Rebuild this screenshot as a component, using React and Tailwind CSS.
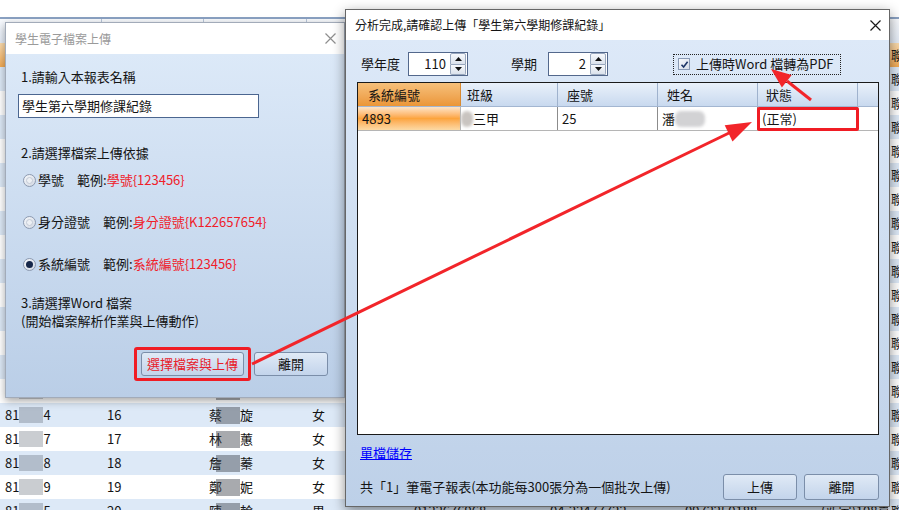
import React from "react";

const colW = ["w-[102px]", "w-[102px]", "w-[103px]", "w-[102px]", "w-[136px]", "w-[135px]", "w-[136px]", "w-[72px]", "w-[120px]"];

const names = [
  ["王", "翔"], ["李", "涵"], ["張", "婷"], ["劉", "瑜"], ["陳", "宇"],
  ["楊", "萱"], ["黃", "豪"], ["吳", "庭"], ["趙", "琪"], ["周", "傑"],
  ["徐", "安"], ["孫", "妤"], ["胡", "銘"], ["朱", "慈"], ["高", "芸"],
  ["蔡", "旋"], ["林", "蕙"], ["詹", "蓁"], ["鄭", "妮"], ["陳", "翰"],
];
const genders = "男女女女男女男女女男男女男女女女女女女男";
const lastDigits = "12345678901235647895";

const rows = names.map((nm, i) => ({
  no: i + 1,
  last: lastDigits[i],
  name: nm,
  gender: genders[i],
}));

function XIcon({ className }) {
  return (
    <svg width="11" height="11" viewBox="0 0 11 11" className={className}>
      <path d="M0.5 0.5 L10.5 10.5 M10.5 0.5 L0.5 10.5" stroke="currentColor" strokeWidth="1.2" fill="none" />
    </svg>
  );
}

function Radio({ checked }) {
  return (
    <span className="flex h-[13px] w-[13px] shrink-0 items-center justify-center rounded-full border border-[#8d9ab0] bg-linear-to-br from-[#f6f8fb] to-[#d3d9e3]">
      {checked ? (
        <span className="h-[7px] w-[7px] rounded-full bg-[#17284a]" />
      ) : (
        <span className="h-[7px] w-[7px] rounded-full border border-[#c3cad6] bg-[#edf0f4]" />
      )}
    </span>
  );
}

function RadioRow({ checked, label, example, className }) {
  return (
    <div className={"flex h-[18px] items-center pl-[5px] " + className}>
      <Radio checked={checked} />
      <span className="ml-[2px]">{label}</span>
      <span className="ml-[13px]">範例:</span>
      <span className="text-[#f0202a]">{example}</span>
    </div>
  );
}

function WinButton({ children, className }) {
  return (
    <div className={"flex shrink-0 items-center justify-center rounded-[3px] border border-[#7b8ea9] bg-linear-to-b from-[#e0eaf6] to-[#c3d4eb] " + className}>
      {children}
    </div>
  );
}

function Spinner({ value }) {
  return (
    <div className="flex h-[24px] w-[60px] shrink-0 items-center border border-[#53688c] bg-white">
      <span className="flex-1 pr-[4px] text-right">{value}</span>
      <div className="mr-[1px] flex h-[22px] w-[16px] flex-col">
        <span className="flex flex-1 items-center justify-center rounded-t-[2px] border border-[#98a7bd] bg-linear-to-b from-[#f7f9fc] to-[#dbe2ec]">
          <svg width="7" height="4" viewBox="0 0 7 4"><path d="M0 4 L3.5 0 L7 4 Z" fill="#111" /></svg>
        </span>
        <span className="flex flex-1 items-center justify-center rounded-b-[2px] border border-t-0 border-[#98a7bd] bg-linear-to-b from-[#f7f9fc] to-[#dbe2ec]">
          <svg width="7" height="4" viewBox="0 0 7 4"><path d="M0 0 L3.5 4 L7 0 Z" fill="#111" /></svg>
        </span>
      </div>
    </div>
  );
}

function BgCell({ i, pad = "pl-[5px]", children }) {
  return (
    <div className={colW[i] + " flex h-full shrink-0 items-center overflow-hidden whitespace-nowrap " + pad}>
      {children}
    </div>
  );
}

function BgRow({ r }) {
  const bg =
    r.no === 1
      ? "bg-linear-to-b from-[#fbdcae] to-[#f2aa52]"
      : r.no % 2 === 0
      ? "bg-[#dde9f7]"
      : "bg-white";
  return (
    <div className={"flex h-[24px] w-max items-center " + bg}>
      <BgCell i={0}>
        81<span className="inline-block h-[16px] w-[24px] bg-[#4e5966]/30" />
        {r.last}
      </BgCell>
      <BgCell i={1}>{r.no}</BgCell>
      <BgCell i={2}>
        {r.name[0]}
        <span className="relative -ml-[6px] inline-block h-[17px] w-[24px] bg-[#3d434c]/45" />
        {r.name[1]}
      </BgCell>
      <BgCell i={3}>{r.gender}</BgCell>
      <BgCell i={4}>0122676968</BgCell>
      <BgCell i={5}>04-22477722</BgCell>
      <BgCell i={6}>0972250188</BgCell>
      <BgCell i={7}>(新家)108臺中市</BgCell>
      <BgCell i={8} pad="pl-[3px]">聯絡人</BgCell>
    </div>
  );
}

export default function App() {
  return (
    <div className="relative h-[510px] w-[899px] overflow-hidden bg-white font-[family-name:'Noto_Sans_CJK_TC','Noto_Sans',sans-serif] text-[13px] leading-[18px] text-[#141414]">
      {/* background grid */}
      <div className="h-[17px] bg-white" />
      <div className="flex h-[26px] w-max border-t-2 border-[#8aa1c2] bg-linear-to-b from-[#f8fafd] to-[#e3ebf6]">
        {colW.map((w, i) => (
          <div key={i} className={w + " shrink-0 border-r border-[#b7c5d9]"} />
        ))}
      </div>
      {rows.map((r) => (
        <BgRow key={r.no} r={r} />
      ))}

      {/* left dialog */}
      <div className="absolute left-[5px] top-[22px] flex h-[376px] w-[340px] flex-col border border-[#a2abb9] shadow-[0_3px_8px_rgba(0,0,0,0.35)]">
        <div className="flex h-[31px] shrink-0 items-center justify-between bg-white pl-[9px] pr-[8px]">
          <span className="text-[12px] text-[#9a9a9a]">學生電子檔案上傳</span>
          <XIcon className="text-[#8e8e8e]" />
        </div>
        <div className="flex flex-1 flex-col bg-linear-to-b from-[#dce9f8] to-[#bacee7] px-[12px]">
          <div className="mt-[14px] pl-[3px]">1.請輸入本報表名稱</div>
          <div className="mt-[8px] flex h-[24px] w-[241px] items-center border border-[#4b6690] bg-white pl-[3px]">
            學生第六學期修課紀錄
          </div>
          <div className="mt-[26px] pl-[3px]">2.請選擇檔案上傳依據</div>
          <RadioRow className="mt-[9px]" label="學號" example="學號{123456}" />
          <RadioRow className="mt-[24px]" label="身分證號" example="身分證號{K122657654}" />
          <RadioRow className="mt-[24px]" checked label="系統編號" example="系統編號{123456}" />
          <div className="mt-[21px] pl-[3px]">3.請選擇Word 檔案</div>
          <div className="pl-[3px]">(開始檔案解析作業與上傳動作)</div>
          <div className="mt-[17px] flex items-center justify-end gap-[3px] pr-[4px]">
            <div className="rounded-[3px] border-[3px] border-[#f01c24] px-[4px] py-[2px]">
              <WinButton className="h-[24px] w-[103px] text-[#e8202a]">選擇檔案與上傳</WinButton>
            </div>
            <WinButton className="h-[24px] w-[74px]">離開</WinButton>
          </div>
        </div>
      </div>

      {/* right dialog */}
      <div className="absolute left-[345px] top-[9px] flex h-[498px] w-[545px] flex-col border border-[#676767] shadow-[0_4px_12px_rgba(0,0,0,0.45)]">
        <div className="flex h-[30px] shrink-0 items-center justify-between bg-white pl-[9px] pr-[8px]">
          <span className="text-[12px] text-[#141414]">分析完成,請確認上傳「學生第六學期修課紀錄」</span>
          <XIcon className="text-[#1a1a1a]" />
        </div>
        <div className="flex flex-1 flex-col bg-linear-to-b from-[#dde9f8] to-[#bdd0e8]">
          <div className="mt-[12px] flex h-[24px] items-center pl-[15px]">
            <span>學年度</span>
            <div className="ml-[8px]">
              <Spinner value="110" />
            </div>
            <span className="ml-[43px]">學期</span>
            <div className="ml-[11px]">
              <Spinner value="2" />
            </div>
            <div className="ml-[65px] flex h-[21px] w-[168px] items-center border border-dotted border-[#222] pl-[4px]">
              <span className="flex h-[12px] w-[12px] items-center justify-center border border-[#8a9ab4] bg-linear-to-br from-[#f7f9fc] to-[#d6dde8]">
                <svg width="9" height="9" viewBox="0 0 9 9">
                  <path d="M1.5 4.8 L3.6 7 L7.6 1.8" stroke="#1d3566" strokeWidth="1.6" fill="none" />
                </svg>
              </span>
              <span className="ml-[6px]">上傳時Word 檔轉為PDF</span>
            </div>
          </div>

          <div className="mr-[10px] ml-[11px] mt-[6px] flex h-[353px] flex-col border border-[#1a1a1a] bg-white">
            <div className="flex h-[24px] shrink-0 border-b border-[#a3b6d1]">
              <div className="flex w-[103px] items-center border-r border-[#d98a30] bg-linear-to-b from-[#f6c07a] to-[#eb9636] pl-[10px]">系統編號</div>
              <div className="flex w-[97px] items-center border-r border-[#9fb2cd] bg-linear-to-b from-[#eaf1fa] to-[#c8d9ef] pl-[6px]">班級</div>
              <div className="flex w-[100px] items-center border-r border-[#9fb2cd] bg-linear-to-b from-[#eaf1fa] to-[#c8d9ef] pl-[9px]">座號</div>
              <div className="flex w-[100px] items-center border-r border-[#9fb2cd] bg-linear-to-b from-[#eaf1fa] to-[#c8d9ef] pl-[9px]">姓名</div>
              <div className="flex w-[100px] items-center border-r border-[#9fb2cd] bg-linear-to-b from-[#eaf1fa] to-[#c8d9ef] pl-[8px]">狀態</div>
              <div className="flex-1 bg-linear-to-b from-[#eaf1fa] to-[#c8d9ef]" />
            </div>
            <div className="flex h-[24px] shrink-0 border-b border-[#b5b5b5]">
              <div className="flex w-[103px] items-center border-r border-[#b5b5b5] bg-linear-to-b from-[#fde4c6] via-[#fca43c] to-[#fcd9a4] pl-[4px]">4893</div>
              <div className="flex w-[97px] items-center border-r border-[#8c8c8c]">
                <span className="h-[16px] w-[12px] rounded-full bg-[#c9c4c0] blur-[1.5px]" />
                <span>三甲</span>
              </div>
              <div className="flex w-[100px] items-center border-r border-[#8c8c8c] pl-[4px]">25</div>
              <div className="flex w-[100px] items-center border-r border-[#8c8c8c] pl-[4px]">
                潘<span className="h-[16px] w-[30px] rounded-[6px] bg-[#d2d2d4] blur-[1.5px]" />
              </div>
              <div className="relative flex w-[100px] items-center border-r border-[#8c8c8c] pl-[4px]">
                (正常)
                <div className="absolute -bottom-[1px] -left-[1px] -right-[2px] top-0 rounded-[2px] border-[3px] border-[#f01c24]" />
              </div>
              <div className="flex-1" />
            </div>
          </div>

          <div className="mt-[9px] self-start pl-[14px] text-[#0000ff] underline">單檔儲存</div>

          <div className="mt-[12px] flex h-[26px] items-center pl-[14px] pr-[10px]">
            <span className="flex-1">共「1」筆電子報表(本功能每300張分為一個批次上傳)</span>
            <WinButton className="h-[26px] w-[74px]">上傳</WinButton>
            <WinButton className="ml-[7px] h-[26px] w-[75px]">離開</WinButton>
          </div>
        </div>
      </div>

      {/* annotation arrows */}
      <svg className="pointer-events-none absolute left-0 top-0" width="899" height="510" viewBox="0 0 899 510">
        <line x1="252" y1="364" x2="729" y2="133" stroke="#f2252a" strokeWidth="3" />
        <polygon points="752,122 732.5,141.4 724.7,125.2" fill="#f2252a" />
        <line x1="811" y1="100" x2="787" y2="81" stroke="#f2252a" strokeWidth="3" />
        <polygon points="771,69 791.7,74.9 781.9,87.5" fill="#f2252a" />
      </svg>
    </div>
  );
}
